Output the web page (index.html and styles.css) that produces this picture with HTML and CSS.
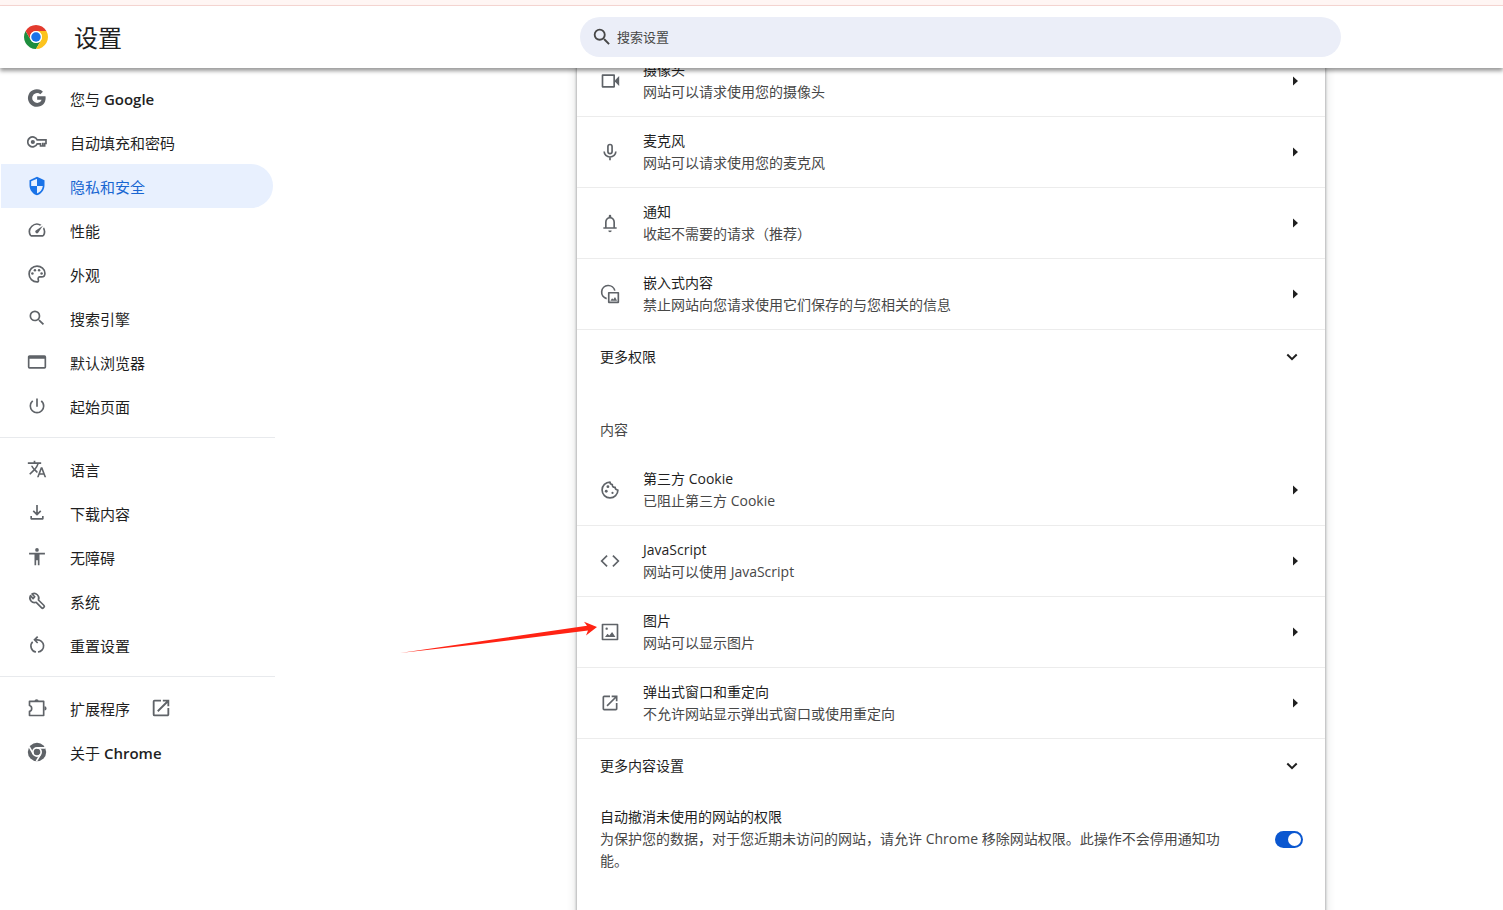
FILE: index.html
```html
<!DOCTYPE html>
<html lang="zh-CN">
<head>
<meta charset="utf-8">
<title>设置</title>
<link rel="stylesheet" href="styles.css">
</head>
<body>
<svg class="defs" aria-hidden="true">
  <symbol id="open" viewBox="0 0 24 24"><path d="M19 19H5V5h7V3H5a2 2 0 0 0-2 2v14a2 2 0 0 0 2 2h14c1.100 0 2-.9 2-2v-7h-2v7zM14 3v2h3.590l-9.830 9.830 1.410 1.410L19 6.410V10h2V3h-7z"/></symbol>
  <symbol id="find" viewBox="0 0 24 24"><path d="M15.500 14h-.79l-.28-.27A6.471 6.471 0 0 0 16 9.500 6.500 6.500 0 1 0 9.500 16c1.610 0 3.090-.59 4.230-1.570l.27.28v.79l5 4.990L20.490 19l-4.990-5zm-6 0C7.010 14 5 11.990 5 9.500S7.010 5 9.500 5 14 7.010 14 9.500 11.990 14 9.500 14z"/></symbol>
  <symbol id="next" viewBox="0 0 20 20"><path d="M8 5.500l5 4.500-5 4.500z"/></symbol>
  <symbol id="expand" viewBox="0 0 20 20"><path d="M5.300 7.500L10 12.100l4.700-4.600" fill="none" stroke="currentColor" stroke-width="2"/></symbol>
</svg>

<div class="infobar"></div>
<header class="toolbar">
  <div class="brand">
    <svg class="logo" viewBox="0 0 48 48">
      <circle cx="24" cy="24" r="24" fill="#fff"/>
      <path d="M3.220 12L13.610 30A12 12 0 0 0 34.390 30L24 48A24 24 0 0 1 3.220 12z" fill="#1e8e3e"/>
      <path d="M24 48A24 24 0 0 0 44.780 12H24A12 12 0 0 1 34.390 30z" fill="#fcc31e"/>
      <path d="M44.780 12A24 24 0 0 0 3.220 12L13.610 30A12 12 0 0 1 24 12z" fill="#e33b2e"/>
      <circle cx="24" cy="24" r="12" fill="#fff"/><circle cx="24" cy="24" r="9.500" fill="#1a73e8"/>
    </svg>
    <h1>设置</h1>
  </div>
  <label class="search">
    <svg viewBox="0 0 24 24"><use href="#find"/></svg>
    <input type="search" placeholder="搜索设置" aria-label="搜索设置">
  </label>
</header>

<div class="page">
  <nav class="sidebar">
    <a href="#"><svg viewBox="0 0 24 24"><path d="M12.200 10v4.200h5.300c-.7 2.200-2.500 3.700-5.300 3.700A5.900 5.900 0 1 1 16 7.500l3.100-3.100A10.600 10.600 0 1 0 12.200 22.600c7 0 11-5.400 10-12.600z"/></svg><span>您与 <b>Google</b></span></a>
    <a href="#"><svg viewBox="0 0 24 24"><path fill="none" stroke="currentColor" stroke-width="2" d="M12.200 9.500H22.800v4.300h-1.600v3h-5v-2.600h-4A5.900 5.900 0 1 1 12.200 9.500zM19 13v3.500"/><circle cx="7" cy="12" r="2.500"/></svg><span>自动填充和密码</span></a>
    <a href="#" class="selected" aria-current="page"><svg viewBox="0 0 24 24"><path d="M12 1L3 5v6c0 5.550 3.840 10.740 9 12 5.160-1.260 9-6.450 9-12V5l-9-4zm0 10.990h7c-.53 4.120-3.280 7.790-7 8.940V12H5V6.300l7-3.110v8.800z"/></svg><span>隐私和安全</span></a>
    <a href="#"><svg viewBox="0 0 24 24"><path d="M20.380 8.570l-1.230 1.850a8 8 0 0 1-.22 7.580H5.070A8 8 0 0 1 15.580 6.850l1.850-1.230A10 10 0 0 0 3.350 19a2 2 0 0 0 1.720 1h13.850a2 2 0 0 0 1.740-1 10 10 0 0 0-.27-10.440zm-9.790 6.840a2 2 0 0 0 2.830 0l5.660-8.490-8.490 5.660a2 2 0 0 0 0 2.830z"/></svg><span>性能</span></a>
    <a href="#"><svg viewBox="0 0 24 24"><path fill="none" stroke="currentColor" stroke-width="2" d="M12 2.500a9.500 9.500 0 1 0 0 19c1.400 0 2-1 1.700-2-.5-1.500-.8-3.500 1.300-4h2.500c2.500 0 4-1.500 4-4.500C21.500 6 17 2.500 12 2.500z"/><circle cx="6.500" cy="11.500" r="1.500"/><circle cx="9.500" cy="7.500" r="1.500"/><circle cx="14.500" cy="7.500" r="1.500"/><circle cx="17.500" cy="11.500" r="1.500"/></svg><span>外观</span></a>
    <a href="#"><svg viewBox="0 0 24 24"><use href="#find"/></svg><span>搜索引擎</span></a>
    <a href="#"><svg viewBox="0 0 24 24"><path fill-rule="evenodd" d="M3 4h18a2 2 0 0 1 2 2v12a2 2 0 0 1-2 2H3a2 2 0 0 1-2-2V6c0-1.100.9-2 2-2zm0 4v10h18V8z"/></svg><span>默认浏览器</span></a>
    <a href="#"><svg viewBox="0 0 24 24"><path d="M13 3h-2v10h2V3zm4.830 2.170l-1.420 1.420A6.920 6.920 0 0 1 19 12a7 7 0 1 1-11.420-5.420L6.170 5.170A8.932 8.932 0 0 0 3 12a9 9 0 0 0 18 0c0-2.740-1.230-5.180-3.170-6.830z"/></svg><span>起始页面</span></a>
    <hr>
    <a href="#"><svg viewBox="0 0 24 24"><path d="M12.870 15.070l-2.540-2.510.03-.03A17.520 17.520 0 0 0 14.070 6H17V4h-7V2H8v2H1v1.990h11.170C11.500 7.920 10.440 9.750 9 11.350 8.070 10.320 7.300 9.190 6.690 8h-2c.73 1.630 1.730 3.170 2.980 4.560l-5.090 5.020L4 19l5-5 3.110 3.110.76-2.040zM18.500 10h-2L12 22h2l1.120-3h4.750L21 22h2l-4.500-12zm-2.620 7l1.620-4.330L19.120 17h-3.240z"/></svg><span>语言</span></a>
    <a href="#"><svg viewBox="0 0 24 24"><path fill="none" stroke="currentColor" stroke-width="2" stroke-linejoin="round" d="M12 2.500v11M7.500 9.500l4.500 4.500 4.500-4.500M5 15.500V19h14v-3.500"/></svg><span>下载内容</span></a>
    <a href="#"><svg viewBox="0 0 24 24"><circle cx="12" cy="3.500" r="2.200"/><path d="M21.500 9H15v13h-2v-6h-2v6H9V9H2.500V7h19z"/></svg><span>无障碍</span></a>
    <a href="#"><svg viewBox="0 0 24 24"><path fill="none" stroke="currentColor" stroke-width="2" stroke-linejoin="round" d="M4.200 5.600A5.600 5.600 0 0 0 11 13.600l6.600 6.600c.7.700 1.400.6 2 0l.8-.8c.6-.6.6-1.300 0-2L13.700 10.800A5.600 5.600 0 0 0 6 3.600l3.300 3.300-2 2.200z"/></svg><span>系统</span></a>
    <a href="#"><svg viewBox="0 0 24 24"><path fill="none" stroke="currentColor" stroke-width="2" d="M10.800 20.400A7.300 7.300 0 0 1 6.800 8.100M13.200 20.400A7.300 7.300 0 0 0 12 5.800H9.500M12.800 2L9 5.800l3.800 3.800"/></svg><span>重置设置</span></a>
    <hr>
    <a href="#"><svg viewBox="0 0 24 24"><path fill="none" stroke="currentColor" stroke-width="2" stroke-linejoin="round" d="M3 4h17v17H3v-5c3.500-.5 3.500-6.500 0-7z"/><path d="M9 4a2.500 2.500 0 0 1 5 0zM21 10a2.500 2.500 0 0 1 0 5z"/></svg><span>扩展程序</span><svg class="external" viewBox="0 0 24 24"><use href="#open"/></svg></a>
    <a href="#"><svg viewBox="0 0 24 24"><circle cx="12" cy="12" r="11"/><g fill="none" stroke="#fff" stroke-width="2"><circle cx="12" cy="12" r="5"/><path d="M12 7h10M7.700 14.500L2.700 5.800M16.300 14.500L11.300 23"/></g></svg><span>关于 <b>Chrome</b></span></a>
  </nav>

  <main class="content">
    <section class="card">
      <ul>
        <li><button class="row"><svg viewBox="0 0 24 24"><path fill="none" stroke="currentColor" stroke-width="2" stroke-linejoin="round" d="M3 5h14v14H3z"/><path d="M18 11l5-5v12l-5-5z"/></svg><span class="text"><span>摄像头</span><small>网站可以请求使用您的摄像头</small></span><svg class="mark"><use href="#next"/></svg></button></li>
        <li><button class="row"><svg viewBox="0 0 24 24"><path fill="none" stroke="currentColor" stroke-width="2" d="M9.500 5.500a2.500 2.500 0 0 1 5 0v6a2.500 2.500 0 0 1-5 0zM5 11.500a7 6.500 0 0 0 14 0M12 18v4"/></svg><span class="text"><span>麦克风</span><small>网站可以请求使用您的麦克风</small></span><svg class="mark"><use href="#next"/></svg></button></li>
        <li><button class="row"><svg viewBox="0 0 24 24"><path d="M12 23c1.100 0 2-.9 2-2h-4c0 1.100.9 2 2 2zm6-6v-6c0-3.070-1.630-5.640-4.500-6.320V3.500a1.500 1.500 0 0 0-3 0v1.180C7.640 5.360 6 7.920 6 11v6H4v2h16v-2h-2zm-2 0H8v-6c0-2.480 1.510-4.500 4-4.500s4 2.020 4 4.500v6z"/></svg><span class="text"><span>通知</span><small>收起不需要的请求（推荐）</small></span><svg class="mark"><use href="#next"/></svg></button></li>
        <li><button class="row"><svg viewBox="0 0 24 24"><path fill="none" stroke="currentColor" stroke-width="2" stroke-linejoin="round" d="M8 17.500A8 8 0 1 1 17.800 8M10.500 10.500h11.500v11.500H10.500z"/><path d="M12.500 20l2-3 1.500 1.700 2-3 2.500 4.300z"/></svg><span class="text"><span>嵌入式内容</span><small>禁止网站向您请求使用它们保存的与您相关的信息</small></span><svg class="mark"><use href="#next"/></svg></button></li>
      </ul>
      <button class="more"><span>更多权限</span><svg class="mark"><use href="#expand"/></svg></button>
      <h2>内容</h2>
      <ul>
        <li><button class="row"><svg viewBox="0 0 24 24"><path fill="none" stroke="currentColor" stroke-width="2" stroke-linejoin="round" d="M12 2.500a9.500 9.500 0 1 0 9.500 9.500c-2.300 0-3.500-1.500-3.300-3.300-2.500.3-3.800-1.200-3.400-3.300-1.800 0-2.800-1.100-2.800-2.900z"/><circle cx="9.500" cy="8" r="1.700"/><circle cx="7.500" cy="13.500" r="1.700"/><circle cx="15" cy="15.500" r="1.300"/></svg><span class="text"><span>第三方 Cookie</span><small>已阻止第三方 Cookie</small></span><svg class="mark"><use href="#next"/></svg></button></li>
        <li><button class="row"><svg viewBox="0 0 24 24"><path fill="none" stroke="currentColor" stroke-width="2" d="M8.500 5.500L2 12l6.500 6.500M15.500 5.500L22 12l-6.500 6.500"/></svg><span class="text"><span>JavaScript</span><small>网站可以使用 JavaScript</small></span><svg class="mark"><use href="#next"/></svg></button></li>
        <li class="pointed">
          <button class="row"><svg viewBox="0 0 24 24"><path fill="none" stroke="currentColor" stroke-width="2" stroke-linejoin="round" d="M3 3h18v18H3z"/><path d="M6 18l3-4 2.200 2.300L14.500 12l4 6z"/><circle cx="8" cy="8" r="1.400"/></svg><span class="text"><span>图片</span><small>网站可以显示图片</small></span><svg class="mark"><use href="#next"/></svg></button>
          <svg class="pointer" viewBox="0 0 198 33"><path d="M0 32L187 4.700 184 .7 197 6l-11 8.500 2-5L80 23z" fill="#ff2314"/></svg>
        </li>
        <li><button class="row"><svg viewBox="0 0 24 24"><use href="#open"/></svg><span class="text"><span>弹出式窗口和重定向</span><small>不允许网站显示弹出式窗口或使用重定向</small></span><svg class="mark"><use href="#next"/></svg></button></li>
      </ul>
      <button class="more"><span>更多内容设置</span><svg class="mark"><use href="#expand"/></svg></button>
      <label class="setting">
        <span class="text"><span>自动撤消未使用的网站的权限</span><small>为保护您的数据，对于您近期未访问的网站，请允许 Chrome 移除网站权限。此操作不会停用通知功能。</small></span>
        <input type="checkbox" role="switch" checked>
      </label>
    </section>
  </main>
</div>
</body>
</html>
```

FILE: styles.css
```css
* { box-sizing: border-box; }

body {
  margin: 0;
  height: 100vh;
  display: flex;
  flex-direction: column;
  overflow: hidden;
  background: #fff;
  color: #1f1f1f;
  font: 14px/22px "Open Sans", "Noto Sans CJK SC", sans-serif;
}

svg { fill: currentColor; flex: none; }
ul { list-style: none; margin: 0; padding: 0; }
button { font: inherit; color: inherit; background: none; border: 0; text-align: left; cursor: pointer; }

.defs { position: absolute; width: 0; height: 0; }

.infobar {
  flex: none;
  height: 6px;
  background: #fff6f4;
  border-bottom: 1px solid #f8d8d4;
}

.toolbar {
  flex: none;
  z-index: 1;
  height: 62px;
  display: flex;
  align-items: center;
  background: #fff;
  padding-right: 162px;
  box-shadow: 0 3px 4px rgba(0, 0, 0, .4);
}
.brand {
  flex: none;
  width: 580px;
  padding-left: 24px;
  display: flex;
  align-items: center;
  gap: 26px;
}
.logo { width: 24px; height: 24px; }
h1 { margin: 0; padding-top: 2px; font-size: 24px; line-height: 32px; font-weight: 400; }

.search {
  flex: 1;
  height: 40px;
  padding: 0 11px;
  display: flex;
  align-items: center;
  gap: 4px;
  border-radius: 20px;
  background: #ebeef8;
  color: #474747;
}
.search svg { width: 22px; height: 22px; }
.search input {
  flex: 1;
  min-width: 0;
  padding: 0;
  border: 0;
  outline: 0;
  background: none;
  font: inherit;
  font-size: 13px;
}
.search input::placeholder { color: #474747; opacity: 1; }

.page { flex: 1; min-height: 0; display: flex; }

.sidebar { flex: none; width: 275px; padding-top: 8px; }
.sidebar a {
  height: 44px;
  margin: 0 2px 0 1px;
  padding-left: 26px;
  display: flex;
  align-items: center;
  gap: 23px;
  border-radius: 0 22px 22px 0;
  color: #1f1f1f;
  font-size: 15px;
  text-decoration: none;
}
.sidebar span { padding-top: 1px; }
.sidebar svg { width: 20px; height: 20px; color: #5f6368; }
.sidebar b { font-weight: 600; }
.sidebar .selected { background: #e8f0fe; color: #1967d2; }
.sidebar .selected svg { color: #1a73e8; }
.sidebar .external { width: 22px; height: 22px; margin-left: -3px; }
.sidebar hr { margin: 9px 0; border: 0; border-top: 1px solid #e8eaed; }

.content { flex: 1; min-width: 0; padding: 0 178px 0 302px; }
.card {
  min-height: 100%;
  margin-top: -22px;
  padding-bottom: 60px;
  background: #fff;
  box-shadow: 0 0 2px 1px rgba(60, 64, 67, .3), 0 4px 8px 2px rgba(60, 64, 67, .15);
}

.row {
  width: 100%;
  min-height: 71px;
  padding: 0 20px 0 23px;
  display: flex;
  align-items: center;
  gap: 23px;
  border-bottom: 1px solid #ececec;
}
.row > svg { width: 20px; height: 20px; color: #5f6368; }
.text { flex: 1; min-width: 0; display: flex; flex-direction: column; }
.text small { font-size: 14px; color: #474747; }
.row .mark, .more .mark { width: 20px; height: 20px; color: #1f1f1f; }

.more {
  width: 100%;
  height: 53px;
  padding: 0 23px;
  display: flex;
  align-items: center;
  justify-content: space-between;
}
h2 {
  margin: 0;
  padding: 36px 23px 14px;
  font-size: 14px;
  font-weight: 400;
  color: #474747;
}

.pointed { position: relative; }
.pointer {
  position: absolute;
  left: -177px;
  top: 24px;
  width: 198px;
  height: 33px;
  pointer-events: none;
}

.setting {
  padding: 14px 22px 0 23px;
  display: flex;
  align-items: center;
  gap: 48px;
}
.setting input {
  appearance: none;
  flex: none;
  width: 28px;
  height: 17px;
  margin: 0;
  padding: 2px;
  display: flex;
  justify-content: flex-end;
  border-radius: 9px;
  background: #0b57d0;
}
.setting input::before {
  content: "";
  width: 13px;
  height: 13px;
  border-radius: 50%;
  background: #fff;
}
.setting input:not(:checked) { justify-content: flex-start; background: #747775; }
```
